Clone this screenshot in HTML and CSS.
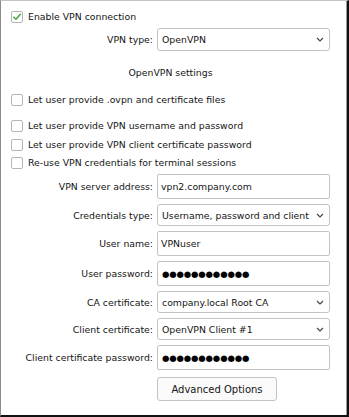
FILE: index.html
```html
<!DOCTYPE html>
<html>
<head>
<meta charset="utf-8">
<link rel="stylesheet" href="styles.css">
</head>
<body>
<div class="frame">
  <div class="inner">
    <label class="check-row">
      <span class="box checked">
        <svg width="12" height="12" viewBox="0 0 12 12"><path d="M2.2 6.2 L4.8 8.8 L10 2.8" fill="none" stroke="#3daa3d" stroke-width="1.8" stroke-linecap="round" stroke-linejoin="round"/></svg>
      </span>
      <span>Enable VPN connection</span>
    </label>

    <div class="form top-form">
      <span class="label">VPN type:</span>
      <div class="select"><span class="val">OpenVPN</span><svg class="chev" width="8" height="5" viewBox="0 0 8 5"><path d="M1 1 L4 4 L7 1" fill="none" stroke="#444" stroke-width="1.2"/></svg></div>
    </div>

    <div class="section-title">OpenVPN settings</div>

    <div class="checks">
      <label class="check-row first"><span class="box"></span><span>Let user provide .ovpn and certificate files</span></label>
      <label class="check-row spaced"><span class="box"></span><span>Let user provide VPN username and password</span></label>
      <label class="check-row"><span class="box"></span><span>Let user provide VPN client certificate password</span></label>
      <label class="check-row"><span class="box"></span><span>Re-use VPN credentials for terminal sessions</span></label>
    </div>

    <div class="form main-form">
      <span class="label">VPN server address:</span>
      <div class="input">vpn2.company.com</div>

      <span class="label">Credentials type:</span>
      <div class="select"><span class="val">Username, password and client</span><svg class="chev" width="8" height="5" viewBox="0 0 8 5"><path d="M1 1 L4 4 L7 1" fill="none" stroke="#444" stroke-width="1.2"/></svg></div>

      <span class="label">User name:</span>
      <div class="input">VPNuser</div>

      <span class="label">User password:</span>
      <div class="input dots">●●●●●●●●●●●●</div>

      <span class="label">CA certificate:</span>
      <div class="select"><span class="val">company.local Root CA</span><svg class="chev" width="8" height="5" viewBox="0 0 8 5"><path d="M1 1 L4 4 L7 1" fill="none" stroke="#444" stroke-width="1.2"/></svg></div>

      <span class="label">Client certificate:</span>
      <div class="select"><span class="val">OpenVPN Client #1</span><svg class="chev" width="8" height="5" viewBox="0 0 8 5"><path d="M1 1 L4 4 L7 1" fill="none" stroke="#444" stroke-width="1.2"/></svg></div>

      <span class="label">Client certificate password:</span>
      <div class="input dots">●●●●●●●●●●●●</div>

      <span></span>
      <div class="btn-cell"><button class="btn">Advanced Options</button></div>
    </div>
  </div>
</div>
</body>
</html>
```

FILE: styles.css
```css
* { box-sizing: border-box; }
html, body { margin: 0; padding: 0; background: #fff; }
body {
  font-family: "DejaVu Sans", sans-serif;
  font-size: 9.33px;
  color: #141414;
}
.frame {
  width: 349px;
  height: 417px;
  border-left: 1px solid #8c8c8c;
  border-top: 1px solid #c4c4c4;
  border-right: 2px solid #111;
  border-bottom: 2px solid #111;
  overflow: hidden;
}
.inner {
  height: 100%;
  border-right: 1px solid #9a9a9a;
  padding: 10px 16px 0 10px;
}
.check-row {
  display: flex;
  align-items: center;
  gap: 5px;
  height: 12px;
  line-height: 12px;
  white-space: nowrap;
}
.box {
  width: 12px;
  height: 12px;
  border: 1px solid #b5b5b5;
  border-radius: 2px;
  background: #fff;
  flex: none;
  display: flex;
  align-items: center;
  justify-content: center;
}
.box svg { display: block; margin-top: -1px; }
.form {
  display: grid;
  grid-template-columns: 1fr 173px;
  column-gap: 4px;
  row-gap: 5px;
  align-items: center;
}
.label { text-align: right; white-space: nowrap; }
.top-form { margin-top: 5px; }
.select {
  height: 23px;
  border: 1px solid #c3c3c3;
  border-radius: 3px;
  background: #fff;
  display: flex;
  align-items: center;
  padding: 0 5px 0 4px;
  white-space: nowrap;
}
.select .val { flex: 1; overflow: hidden; }
.chev { display: block; flex: none; }
.input {
  height: 25px;
  border: 1px solid #c3c3c3;
  border-radius: 2px;
  background: #fff;
  display: flex;
  align-items: center;
  padding: 0 3px;
  white-space: nowrap;
}
.input.dots { font-size: 8.5px; letter-spacing: -0.15px; padding-left: 4px; color: #000; }
.section-title {
  text-align: center;
  margin-top: 16px;
  height: 12px;
  line-height: 12px;
}
.checks { margin-top: 15px; }
.checks .spaced { margin-top: 14px; }
.checks .check-row + .check-row:not(.spaced) { margin-top: 6.5px; }
.main-form { margin-top: 5px; }
.main-form .select { height: 22px; }
.btn-cell { padding-top: 2px; }
.btn {
  width: 120px;
  height: 24px;
  border: 1px solid #c3c3c3;
  border-radius: 3px;
  background: #fafafa;
  font-family: "DejaVu Sans", sans-serif;
  font-size: 10px;
  color: #141414;
  padding: 0;
}
```
